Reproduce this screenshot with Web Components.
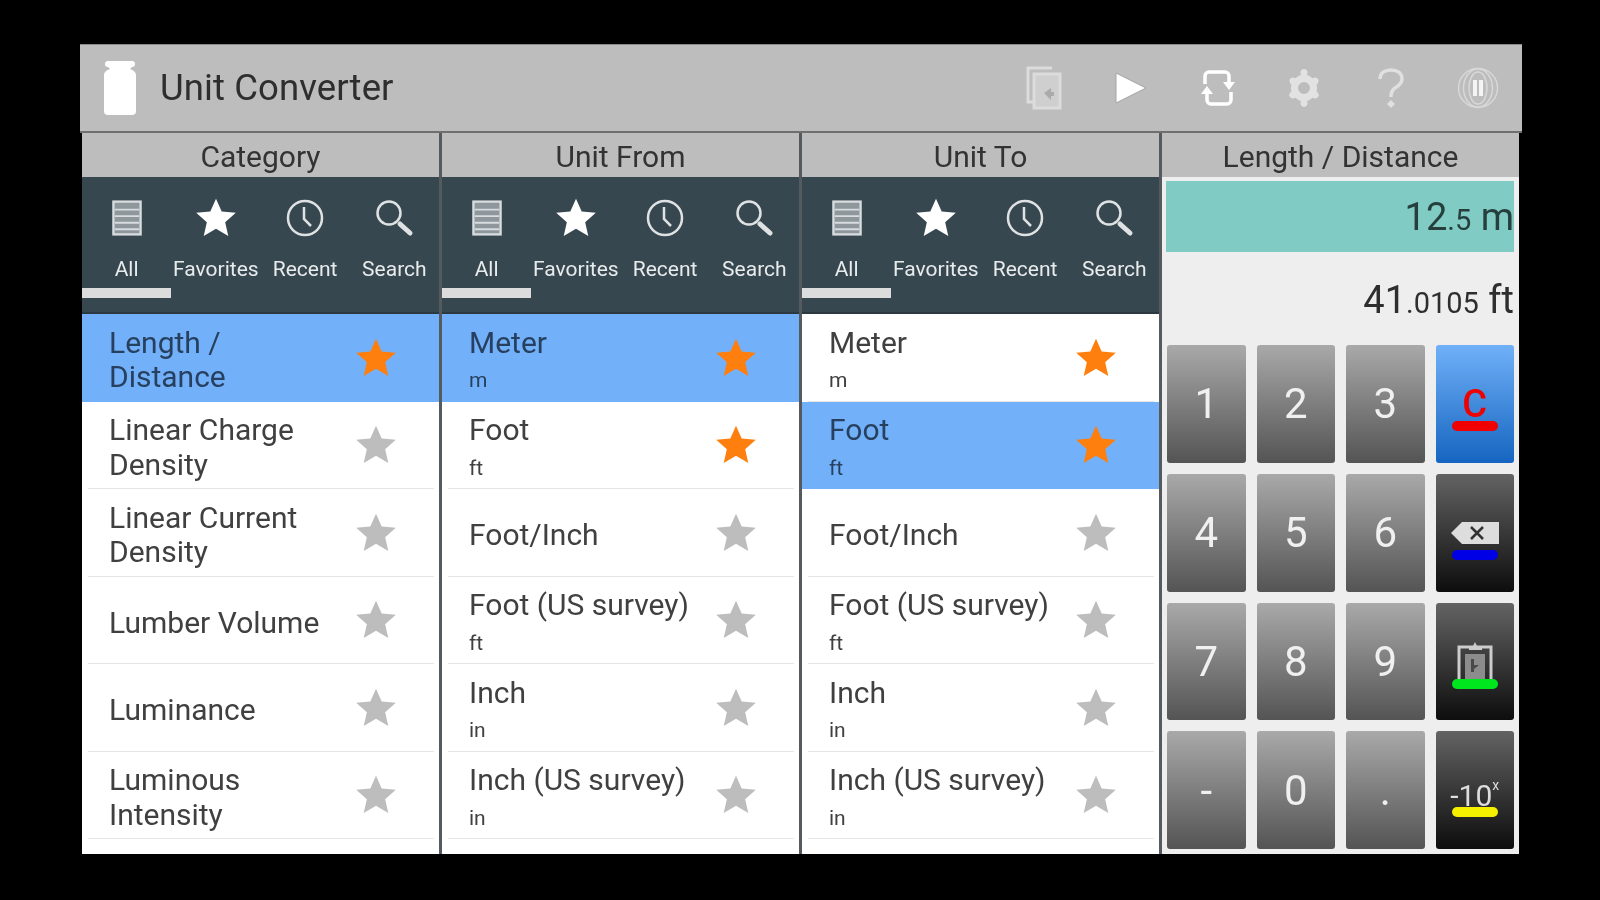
<!DOCTYPE html>
<html>
<head>
<meta charset="utf-8">
<title>Unit Converter</title>
<style>
  html, body { margin: 0; height: 100%; background: #000; }
  body { display: flex; align-items: flex-start; padding: 44px 0 0 80px; box-sizing: border-box; font-family: Roboto, "Liberation Sans", sans-serif; }
</style>
</head>
<body>
<unit-app>
  <picker-column title="Category">
    <list-row fav selected>Length / Distance</list-row>
    <list-row>Linear Charge Density</list-row>
    <list-row>Linear Current Density</list-row>
    <list-row>Lumber Volume</list-row>
    <list-row>Luminance</list-row>
    <list-row>Luminous Intensity</list-row>
  </picker-column>
  <picker-column title="Unit From">
    <list-row fav selected sub="m">Meter</list-row>
    <list-row fav sub="ft">Foot</list-row>
    <list-row>Foot/Inch</list-row>
    <list-row sub="ft">Foot (US survey)</list-row>
    <list-row sub="in">Inch</list-row>
    <list-row sub="in">Inch (US survey)</list-row>
  </picker-column>
  <picker-column title="Unit To">
    <list-row fav sub="m">Meter</list-row>
    <list-row fav selected sub="ft">Foot</list-row>
    <list-row>Foot/Inch</list-row>
    <list-row sub="ft">Foot (US survey)</list-row>
    <list-row sub="in">Inch</list-row>
    <list-row sub="in">Inch (US survey)</list-row>
  </picker-column>
  <calc-panel title="Length / Distance"></calc-panel>
</unit-app>

<script>
// icons shared by the components
const ICONS = {
  weight: '<svg width="34" height="56" viewBox="0 0 34 56"><path fill="#fff" d="M5 1h24a2 2 0 0 1 0 6l-2 2c3 1 6 3 6 6v36a4 4 0 0 1-4 4H5a4 4 0 0 1-4-4V15c0-3 3-5 6-6L5 7a2 2 0 0 1 0-6z"/></svg>',
  paste: '<svg width="38" height="44" viewBox="0 0 38 44" fill="none" stroke="#dcdcdc" stroke-width="3"><path d="M27 2H3v34h5"/><path fill="#cfcfcf" d="M9 8h26v34H9z"/><path d="M19 27l7-5v4h3v4h-3v4z" fill="#aaa" stroke="none"/></svg>',
  play: '<svg width="36" height="36" viewBox="0 0 36 36"><path fill="#fff" stroke="#a5a5a5" stroke-width="1" d="M3 3l30 15L3 33z"/></svg>',
  sync: '<svg width="38" height="40" viewBox="0 0 38 40" fill="none" stroke="#fff" stroke-width="3.500"><path d="M6 16V8a4 4 0 0 1 4-4h16a4 4 0 0 1 4 4v7"/><path d="M32 24v8a4 4 0 0 1-4 4H12a4 4 0 0 1-4-4v-7"/><path fill="#fff" stroke="none" d="M24 14h12l-6 8zM2 26h12l-6-8z"/></svg>',
  gear: '<svg width="36" height="40" viewBox="0 0 36 40"><path fill="#e2e2e2" fill-rule="evenodd" d="M18 1a3.500 3.500 0 0 1 3.400 4.400l-.4 1.600a13 13 0 0 1 5.600 3.200l1.600-.5a3.500 3.500 0 0 1 3.600 5.700l-1.200 1.200a13 13 0 0 1 0 6.800l1.200 1.200a3.500 3.500 0 0 1-3.600 5.700l-1.600-.5a13 13 0 0 1-5.600 3.200l.4 1.600a3.500 3.500 0 1 1-6.800 0l.4-1.600a13 13 0 0 1-5.600-3.200l-1.600.5a3.500 3.500 0 0 1-3.600-5.700l1.200-1.200a13 13 0 0 1 0-6.800l-1.200-1.200a3.500 3.500 0 0 1 3.600-5.700l1.600.5a13 13 0 0 1 5.600-3.200l-.4-1.600A3.500 3.500 0 0 1 18 1zm0 13a6 6 0 1 0 0 12 6 6 0 0 0 0-12z"/></svg>',
  help: '<svg width="28" height="40" viewBox="0 0 28 40" fill="none" stroke="#e0e0e0" stroke-width="3.500"><path d="M3 11C3 5 8 2 14 2s11 3 11 9c0 5-4 7-7 9-3 2-4 4-4 9"/><path fill="#e0e0e0" stroke="none" d="M14 32l4 4-4 4-4-4z"/></svg>',
  rings: '<svg width="42" height="42" viewBox="0 0 42 42" fill="none" stroke="#d8d8d8" stroke-width="1.500"><circle cx="21" cy="21" r="19.500"/><ellipse cx="21" cy="21" rx="14.500" ry="19"/><ellipse cx="21" cy="21" rx="9" ry="16"/><path stroke-width="4" stroke="#f4f4f4" d="M18 13v16M24 13v16"/></svg>',
  list: '<svg width="30" height="36" viewBox="0 0 32 38"><rect x="1.500" y="1.500" width="29" height="35" fill="#8d979c" stroke="#d8dcde" stroke-width="2.500"/><path stroke="#d8dcde" stroke-width="2" d="M3 10h26M3 17h26M3 24h26M3 31h26"/></svg>',
  star: '<svg width="44" height="44" viewBox="0 0 24 24"><polygon fill="currentColor" points="12,1.500 15.100,8.400 22.800,9.200 17,14.300 18.700,21.800 12,17.900 5.300,21.800 7,14.300 1.200,9.200 8.900,8.400"/></svg>',
  clock: '<svg width="38" height="38" viewBox="0 0 38 38" fill="none" stroke="#dfe2e3" stroke-width="2.500"><circle cx="19" cy="19" r="17"/><path d="M18 8v12l7 7"/></svg>',
  search: '<svg width="40" height="38" viewBox="0 0 40 38" fill="none" stroke="#dfe2e3"><circle cx="15" cy="14" r="11.500" stroke-width="2.500"/><path stroke-width="5" stroke-linecap="round" d="M26 25l10 9"/></svg>',
  back: '<svg width="50" height="24" viewBox="0 0 50 24"><path fill="#ddd" d="M12 1h37v22H12L1 12z"/><path stroke="#333" stroke-width="2.500" d="M21 6l12 12M33 6L21 18"/></svg>',
  clip: '<svg width="38" height="40" viewBox="0 0 38 40" fill="none"><path fill="#ccc" d="M13 5h4l2-4 2 4h5v4H13z"/><path stroke="#ccc" stroke-width="3" d="M3 40V6h32v34"/><rect x="9" y="13" width="20" height="27" fill="#8c8c8c"/><path fill="#4a4a4a" d="M15 18h3v6h5l-5 4v3h-3z"/></svg>'
};

class UnitApp extends HTMLElement {
  constructor() {
    super();
    this.attachShadow({ mode: 'open' });
    const tools = ['paste', 'play', 'sync', 'gear', 'help', 'rings'];
    this.shadowRoot.innerHTML = `
      <style>
        :host { display: flex; flex-direction: column; width: 1442px; height: 810px; filter: blur(.7px); }
        header { display: flex; align-items: center; height: 89px; box-sizing: border-box; background: #bdbdbd; border-top: 1px solid #8a8a8a; border-bottom: 2px solid #6f6f6f; padding-left: 23px; }
        .name { font-size: 36.500px; color: #2e2e2e; margin: -2px 0 0 23px; flex: 1; letter-spacing: .1px; }
        .tools { display: flex; margin-right: 1px; }
        .tools span { width: 86.700px; display: flex; justify-content: center; align-items: center; }
        main { flex: 1; display: flex; margin: 0 3px 0 2px; min-height: 0; }
      </style>
      <header>
        ${ICONS.weight}
        <div class="name">Unit Converter</div>
        <div class="tools">${tools.map(t => `<span>${ICONS[t]}</span>`).join('')}</div>
      </header>
      <main><slot></slot></main>
    `;
  }
}

class PickerColumn extends HTMLElement {
  constructor() {
    super();
    this.attachShadow({ mode: 'open' });
  }
  connectedCallback() {
    const tabs = [['list', 'All'], ['star', 'Favorites'], ['clock', 'Recent'], ['search', 'Search']];
    this.shadowRoot.innerHTML = `
      <style>
        :host { display: flex; flex-direction: column; width: 360px; box-sizing: border-box; border-right: 3px solid #555a5e; background: #fff; }
        h2 { margin: 0; height: 44px; background: #bdbdbd; font: 400 30px/47px Roboto, sans-serif; color: #333; text-align: center; }
        nav { display: flex; height: 137px; background: #37474f; box-sizing: border-box; border-bottom: 2px solid #2c3940; }
        nav div { flex: 1; display: flex; flex-direction: column; align-items: center; position: relative; color: #fff; }
        nav i { height: 44px; margin-top: 19px; display: flex; align-items: center; }
        nav b { font: 400 21px/26px Roboto, sans-serif; color: #e8ebec; margin-top: 16px; white-space: nowrap; }
        nav .on::after { content: ""; position: absolute; left: 0; right: 0; top: 111px; height: 10px; background: #dcdcdc; }
        section { flex: 1; }
      </style>
      <h2>${this.getAttribute('title')}</h2>
      <nav>${tabs.map((t, i) => `<div class="${i === 0 ? 'on' : ''}"><i>${ICONS[t[0]]}</i><b>${t[1]}</b></div>`).join('')}</nav>
      <section><slot></slot></section>
    `;
  }
}

class ListRow extends HTMLElement {
  constructor() {
    super();
    this.attachShadow({ mode: 'open' });
  }
  connectedCallback() {
    const sub = this.getAttribute('sub');
    const fav = this.hasAttribute('fav');
    this.shadowRoot.innerHTML = `
      <style>
        :host { display: block; height: 87.500px; box-sizing: border-box; position: relative; }
        :host([selected]) { background: #72b0f9; }
        :host(:not([selected]))::after { content: ""; position: absolute; left: 6px; right: 5px; bottom: 0; height: 1px; background: #e6e6e6; }
        .row { height: 100%; box-sizing: border-box; display: flex; align-items: center; padding: 5px 0 0 27px; }
        .txt { width: 228px; margin-right: 17px; font-size: 30px; line-height: 34.500px; color: #404040; }
        :host([selected]) .txt { color: #27405f; }
        .sub { font-size: 21px; line-height: 30px; display: block; margin-top: 5px; }
        .star { width: 44px; margin-top: -5px; display: flex; color: ${fav ? '#ff7f0e' : '#bdbdbd'}; }
      </style>
      <div class="row">
        <div class="txt"><slot></slot>${sub ? `<span class="sub">${sub}</span>` : ''}</div>
        <div class="star">${ICONS.star}</div>
      </div>
    `;
  }
}

class KeyButton extends HTMLElement {
  constructor() {
    super();
    this.attachShadow({ mode: 'open' });
    this.shadowRoot.innerHTML = `
      <style>
        :host { display: flex; flex-direction: column; align-items: center; justify-content: center; position: relative; box-sizing: border-box; border-radius: 3px; background: linear-gradient(#a9a9a9, #545454); color: #f0f0f0; font: 400 42px Roboto, sans-serif; }
        :host([kind=dark]) { background: linear-gradient(#636363, #0d0d0d); }
        :host([kind=blue]) { background: linear-gradient(#70b0f8, #1565c0); }
        .bar { position: absolute; left: 16px; top: 76px; width: 46px; height: 10px; border-radius: 5px; background: var(--bar); display: none; }
        :host([bar]) .bar { display: block; }
      </style>
      <slot></slot>
      <div class="bar"></div>
    `;
  }
  connectedCallback() {
    if (this.hasAttribute('bar')) this.style.setProperty('--bar', this.getAttribute('bar'));
  }
}

class CalcPanel extends HTMLElement {
  constructor() {
    super();
    this.attachShadow({ mode: 'open' });
  }
  connectedCallback() {
    const digits = ['1', '2', '3', null, '4', '5', '6', null, '7', '8', '9', null, '-', '0', '.', null];
    const side = [
      `<key-button kind="blue" bar="#f00000"><span style="color:#f00000;font:500 38px/34px Roboto,sans-serif">C</span></key-button>`,
      `<key-button kind="dark" bar="#0000e6">${ICONS.back}</key-button>`,
      `<key-button kind="dark" bar="#00e61e">${ICONS.clip}</key-button>`,
      `<key-button kind="dark" bar="#f5f000" style="padding-top:12px"><span style="font:400 30px/34px Roboto,sans-serif;color:#ddd;white-space:nowrap">-10<sup style="font-size:14px;line-height:0;vertical-align:16px">x</sup></span></key-button>`
    ];
    let s = 0;
    const keys = digits.map(d => d === null ? side[s++] : `<key-button>${d}</key-button>`).join('');
    this.shadowRoot.innerHTML = `
      <style>
        :host { display: flex; flex-direction: column; flex: 1; background: #eee; min-width: 0; }
        h2 { margin: 0; height: 44px; background: #bdbdbd; font: 400 30px/47px Roboto, sans-serif; color: #333; text-align: center; }
        .screen { height: 71px; margin: 4px 5px 0 4px; background: #80cbc4; display: flex; align-items: center; justify-content: flex-end; color: #263f3d; }
        .result { height: 93px; box-sizing: border-box; padding-top: 3px; margin: 0 5px 0 4px; display: flex; align-items: center; justify-content: flex-end; color: #2e2e2e; }
        .big { font-size: 38px; white-space: pre; }
        .small { font-size: 29px; }
        .pad { flex: 1; display: grid; grid-template-columns: repeat(4, 1fr); grid-template-rows: repeat(4, 1fr); gap: 11px; padding: 0 5px 5px 5px; }
      </style>
      <h2>${this.getAttribute('title')}</h2>
      <div class="screen"><span class="big">12<span class="small">.5</span> m</span></div>
      <div class="result"><span class="big">41<span class="small">.0105</span> ft</span></div>
      <div class="pad">${keys}</div>
    `;
  }
}

customElements.define('unit-app', UnitApp);
customElements.define('picker-column', PickerColumn);
customElements.define('list-row', ListRow);
customElements.define('key-button', KeyButton);
customElements.define('calc-panel', CalcPanel);
</script>
</body>
</html>
